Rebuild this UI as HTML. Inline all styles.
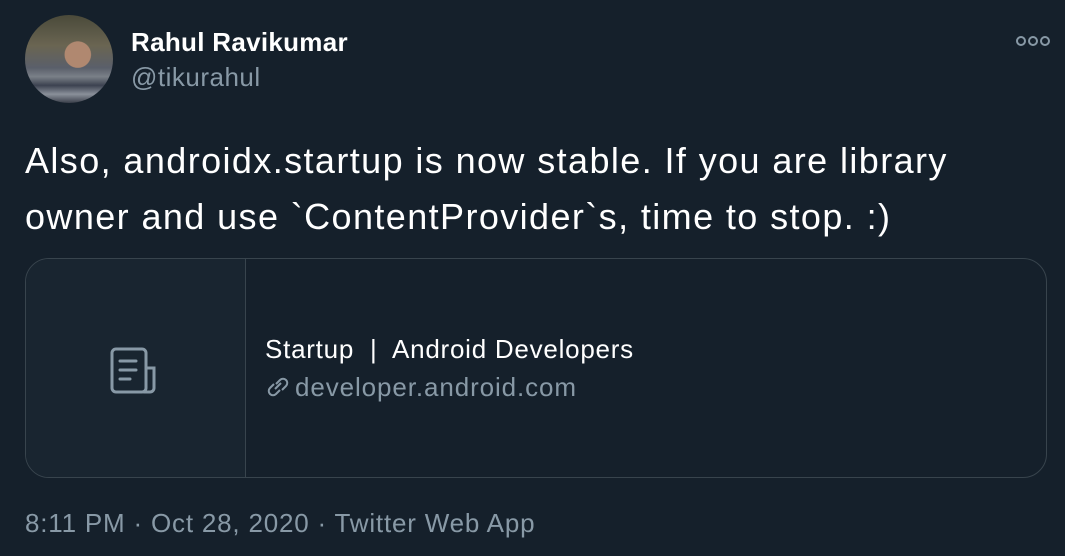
<!DOCTYPE html>
<html><head><style>
body{margin:0;width:1065px;height:556px;background:#15202b;font-family:"Liberation Sans",Arial,sans-serif;overflow:hidden;position:relative}
.av{position:absolute;left:25px;top:15px;width:88px;height:88px;border-radius:50%;background:radial-gradient(circle at 60% 45%,#b08870 0 18%,transparent 19%),linear-gradient(180deg,#4a4a3a 0%,#6a6552 35%,#5a5f6a 60%,#7a8088 70%,#3c4250 80%,#8a909a 90%,#3a3f4a 100%)}
.name{position:absolute;left:131px;top:27px;color:#fff;font-weight:bold;font-size:26px;letter-spacing:0.3px}
.handle{position:absolute;left:131px;top:62px;color:#8899a6;font-size:26px;letter-spacing:0.5px}
.dots{position:absolute;left:1016px;top:36px;display:flex;gap:2px}
.dots i{width:6px;height:6px;border:2px solid #8899a6;border-radius:50%}
.txt{position:absolute;left:25px;top:133px;color:#fff;font-size:36px;letter-spacing:1.4px;line-height:56px;width:1040px;white-space:nowrap}
.card{position:absolute;left:25px;top:258px;width:1020px;height:218px;border:1px solid #38444d;border-radius:24px;overflow:hidden}
.lp{position:absolute;left:0;top:0;width:219px;height:218px;background:#192530;border-right:1px solid #38444d}
.t1{position:absolute;left:239px;top:75px;color:#fff;font-size:26px;letter-spacing:0.75px}
.t2{position:absolute;left:239px;top:113px;color:#8899a6;font-size:26px;letter-spacing:0.9px}
.foot{position:absolute;left:25px;top:508px;color:#8899a6;font-size:26px;letter-spacing:0.8px}
</style></head><body>
<div class="av"></div>
<div class="name">Rahul Ravikumar</div>
<div class="handle">@tikurahul</div>
<div class="dots"><i></i><i></i><i></i></div>
<div class="txt">Also, androidx.startup is now stable. If you are library<br>owner and use `ContentProvider`s, time to stop. :)</div>
<div class="card"><div class="lp">
<svg style="position:absolute;left:84px;top:88px" width="50" height="50" viewBox="0 0 50 50" fill="none" stroke="#8899a6" stroke-width="3" stroke-linecap="round"><rect x="2" y="2" width="34" height="43" rx="4"/><path d="M36 21h8v20a4 4 0 0 1-4 4H34"/><path d="M10 14h16M10 23h16M10 32h10"/></svg>
</div>
<div class="t1">Startup &nbsp;|&nbsp; Android Developers</div>
<div class="t2"><svg width="30" height="24" viewBox="0 0 30 24" style="vertical-align:-3px" fill="none" stroke="#8899a6" stroke-width="2"><path d="M11 9l4-4a4 4 0 0 1 6 6l-4 4M15 15l-4 4a4 4 0 0 1-6-6l4-4M10 14l6-6"/></svg>developer.android.com</div>
</div>
<div class="foot">8:11 PM · Oct 28, 2020 · Twitter Web App</div>
</body></html>
